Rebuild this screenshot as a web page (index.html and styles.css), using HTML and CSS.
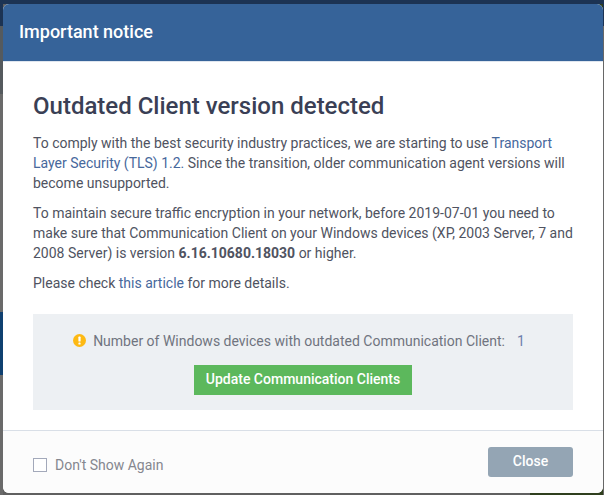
FILE: index.html
```html
<!DOCTYPE html>
<html lang="en">
<head>
<meta charset="utf-8">
<title>Important notice</title>
<link rel="stylesheet" href="styles.css">
</head>
<body>
<div class="dialog">
  <header class="dialog-head">Important notice</header>
  <main class="dialog-body">
    <h1 class="title">Outdated Client version detected</h1>
    <p class="para">To comply with the best security industry practices, we are starting to use <a class="link">Transport Layer Security (TLS) 1.2.</a> Since the transition, older communication agent versions will become unsupported.</p>
    <p class="para">To maintain secure traffic encryption in your network, before 2019-07-01 you need to make sure that Communication Client on your Windows devices (XP, 2003 Server, 7 and 2008 Server) is version <b class="strong">6.16.10680.18030</b> or higher.</p>
    <p class="para">Please check <a class="link">this article</a> for more details.</p>
    <section class="panel">
      <div class="panel-line">
        <svg class="warn" width="13" height="13" viewBox="0 0 13 13"><circle cx="6.5" cy="6.5" r="6.5" fill="#fdb913"/><rect x="5.4" y="2.6" width="2.2" height="5" rx="0.7" fill="#fff"/><rect x="5.4" y="8.6" width="2.2" height="2" rx="0.7" fill="#fff"/></svg>
        <span class="panel-text">Number of Windows devices with outdated Communication Client:</span>
        <span class="panel-count">1</span>
      </div>
      <button class="btn-update">Update Communication Clients</button>
    </section>
  </main>
  <footer class="dialog-foot">
    <label class="check"><span class="box"></span><span class="check-label">Don't Show Again</span></label>
    <button class="btn-close">Close</button>
  </footer>
</div>
</body>
</html>
```
FILE: styles.css
```css
* { box-sizing: border-box; }
html, body { margin: 0; height: 495px; overflow: hidden; }
body {
  background:
    linear-gradient(#1c3353 0 4px, transparent 4px),
    linear-gradient(#1c3353 0 26px, #555a5e 26px 94px, #6a6a6a 94px 312px, #0f4070 312px 375px, #6a6a6a 375px) left top / 3px 100% no-repeat,
    linear-gradient(#1c3353 0 26px, #676767 26px) right top / 1px 100% no-repeat,
    linear-gradient(to right, #606060 0 530px, #2f3f1e 530px);
  font-family: Roboto, sans-serif;
  padding: 4px 0 2px 3px;
}
.dialog {
  height: 489px;
  width: 600px;
  background: #fff;
  border-radius: 6px;
  overflow: hidden;
  display: flex;
  flex-direction: column;
}
.dialog-head {
  height: 58px;
  flex: none;
  background: #366399;
  border-bottom: 1px solid #dfe6ef;
  color: #fff;
  font-size: 18px;
  font-weight: 500;
  line-height: 55px;
  padding-left: 16px;
}
.dialog-body { flex: 1; padding: 30px 30px 0; }
.title {
  margin: 0 0 13px;
  font-size: 24px;
  line-height: 28px;
  font-weight: 500;
  color: #3a3f55;
}
.para {
  margin: 0 0 10px;
  font-size: 14px;
  line-height: 20px;
  color: #4f5361;
}
.link { color: #47689c; }
.strong { font-weight: 700; }
.panel {
  margin-top: 21px;
  height: 96px;
  background: #edf0f3;
  display: flex;
  flex-direction: column;
  align-items: center;
  padding-top: 20px;
}
.panel-line { display: flex; align-items: center; height: 13px; font-size: 14px; color: #70747f; padding-right: 8px; }
.warn { margin-right: 7px; }
.panel-count { margin-left: 12px; color: #6d80ad; }
.btn-update {
  margin-top: 18px;
  width: 218px;
  height: 30px;
  border: 0;
  padding: 0 0 2px;
  background: #5cb85c;
  color: #fff;
  font: 500 14px Roboto, sans-serif;
}
.dialog-foot {
  height: 63px;
  flex: none;
  background: #fcfcfc;
  border-top: 1px solid #d9dfe7;
  display: flex;
  align-items: flex-start;
  justify-content: space-between;
  padding: 16px 30px 0;
}
.check { display: flex; align-items: center; margin-top: 10px; }
.box { width: 14px; height: 14px; border: 1px solid #a3a9ba; background: #fff; margin-right: 8px; }
.check-label { font-size: 14px; color: #85878f; }
.btn-close {
  width: 85px;
  height: 30px;
  border: 0;
  padding: 0 0 2px;
  border-radius: 3px;
  background: #94a5b4;
  color: #fff;
  font: 500 14px Roboto, sans-serif;
}
```
